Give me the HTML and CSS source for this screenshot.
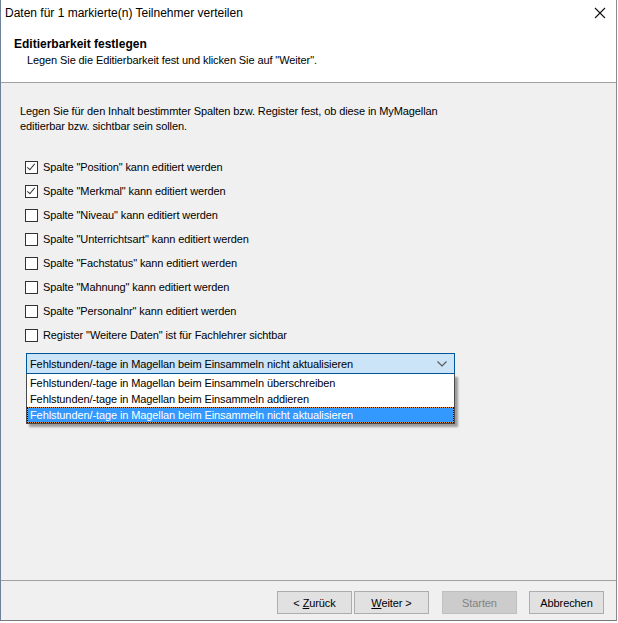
FILE: index.html
```html
<!DOCTYPE html>
<html lang="de">
<head>
    <meta charset="UTF-8">
    <title>Daten verteilen</title>
    <link rel="stylesheet" href="styles.css">
</head>
<body>
    <div class="window">
        <div class="top">
            <div class="titlebar">
                <span class="title">Daten für 1 markierte(n) Teilnehmer verteilen</span>
                <svg class="close" width="12" height="12" viewBox="0 0 12 12">
                    <path d="M1 1 L11 11 M11 1 L1 11" stroke="#111" stroke-width="1.1" fill="none"/>
                </svg>
            </div>
            <div class="head-title">Editierbarkeit festlegen</div>
            <div class="head-sub">Legen Sie die Editierbarkeit fest und klicken Sie auf "Weiter".</div>
        </div>

        <div class="content">
            <p class="intro">Legen Sie für den Inhalt bestimmter Spalten bzw. Register fest, ob diese in MyMagellan<br>editierbar bzw. sichtbar sein sollen.</p>

            <div class="checks">
                <label class="check"><span class="box checked"></span>Spalte "Position" kann editiert werden</label>
                <label class="check"><span class="box checked"></span>Spalte "Merkmal" kann editiert werden</label>
                <label class="check"><span class="box"></span>Spalte "Niveau" kann editiert werden</label>
                <label class="check"><span class="box"></span>Spalte "Unterrichtsart" kann editiert werden</label>
                <label class="check"><span class="box"></span>Spalte "Fachstatus" kann editiert werden</label>
                <label class="check"><span class="box"></span>Spalte "Mahnung" kann editiert werden</label>
                <label class="check"><span class="box"></span>Spalte "Personalnr" kann editiert werden</label>
                <label class="check"><span class="box"></span>Register "Weitere Daten" ist für Fachlehrer sichtbar</label>
            </div>

            <div class="combo-wrap">
                <div class="combo">
                    <span>Fehlstunden/-tage in Magellan beim Einsammeln nicht aktualisieren</span>
                    <svg class="chevron" width="10" height="6" viewBox="0 0 10 6">
                        <path d="M0.5 0.5 L5 5 L9.5 0.5" stroke="#555" stroke-width="1.1" fill="none"/>
                    </svg>
                </div>
                <div class="dropdown">
                    <div class="option">Fehlstunden/-tage in Magellan beim Einsammeln überschreiben</div>
                    <div class="option">Fehlstunden/-tage in Magellan beim Einsammeln addieren</div>
                    <div class="option selected">Fehlstunden/-tage in Magellan beim Einsammeln nicht aktualisieren</div>
                </div>
            </div>
        </div>

        <div class="footer">
            <button class="btn"><span>&lt; <u>Z</u>urück</span></button>
            <button class="btn"><span><u>W</u>eiter &gt;</span></button>
            <button class="btn disabled">Starten</button>
            <button class="btn">Abbrechen</button>
        </div>
    </div>
</body>
</html>
```

FILE: styles.css
```css
body {
    margin: 0;
    background-color: #ffffff;
    font-family: "Liberation Sans", Arial, sans-serif;
    font-size: 11px;
    letter-spacing: -0.1px;
    color: #000000;
}
.window {
    width: 615px;
    height: 620px;
    border-left: 1px solid #6f809a;
    border-right: 1px solid #8b8b8b;
    border-bottom: 1px solid #7a7a7a;
    background-color: #f0f0f0;
    display: flex;
    flex-direction: column;
}
/* Kopfbereich */
.top {
    background-color: #ffffff;
    height: 82px;
    border-bottom: 1px solid #a0a0a0;
}
.titlebar {
    height: 25px;
    display: flex;
    align-items: center;
    justify-content: space-between;
    padding: 0 10px 0 4px;
}
.title {
    font-size: 12px;
    letter-spacing: 0;
}
.head-title {
    font-weight: bold;
    font-size: 12px;
    letter-spacing: 0;
    margin: 12px 0 0 13px;
}
.head-sub {
    margin: 3px 0 0 26px;
}
/* Inhalt */
.content {
    flex: 1;
    padding: 21px 0 0 19px;
}
.intro {
    margin: 0;
    line-height: 15px;
}
.checks {
    display: flex;
    flex-direction: column;
    margin-top: 21px;
    padding-left: 5px;
}
.check {
    display: flex;
    align-items: center;
    height: 24px;
}
.box {
    width: 11px;
    height: 11px;
    border: 1px solid #333333;
    background-color: #ffffff;
    margin-right: 5px;
    position: relative;
}
.box.checked::after {
    content: "";
    position: absolute;
    left: 3px;
    top: 0px;
    width: 3px;
    height: 7px;
    border-right: 1px solid #333333;
    border-bottom: 1px solid #333333;
    transform: rotate(40deg);
}
/* Auswahlliste */
.combo-wrap {
    margin: 6px 0 0 6px;
    width: 429px;
}
.combo {
    height: 19px;
    border: 1px solid #005499;
    background-color: #cce4f7;
    display: flex;
    align-items: center;
    justify-content: space-between;
    padding: 0 7px 0 3px;
}
.dropdown {
    border: 1px solid #4a4a4a;
    border-top: none;
    background-color: #ffffff;
    box-shadow: 3px 3px 2px rgba(0, 0, 0, 0.35);
    padding-top: 1px;
}
.option {
    height: 14px;
    line-height: 14px;
    padding-left: 2px;
    border: 1px solid transparent;
}
.option.selected {
    color: #ffffff;
    border: 1px dotted #000000;
    background: linear-gradient(#3399ff, #3399ff) padding-box, #e8962e border-box;
}
/* Schaltflächen */
.footer {
    height: 29px;
    border-top: 1px solid #a0a0a0;
    display: flex;
    align-items: flex-start;
    padding: 10px 0 0 276px;
}
.btn {
    width: 75px;
    height: 23px;
    border: 1px solid #adadad;
    background-color: #e1e1e1;
    font-family: "Liberation Sans", Arial, sans-serif;
    font-size: 11px;
    letter-spacing: -0.1px;
    color: #000000;
    padding: 0;
    margin-right: 2px;
}
.btn.disabled {
    background-color: #cccccc;
    border-color: #bfbfbf;
    color: #838383;
    margin-left: 11px;
    margin-right: 12px;
}
```
